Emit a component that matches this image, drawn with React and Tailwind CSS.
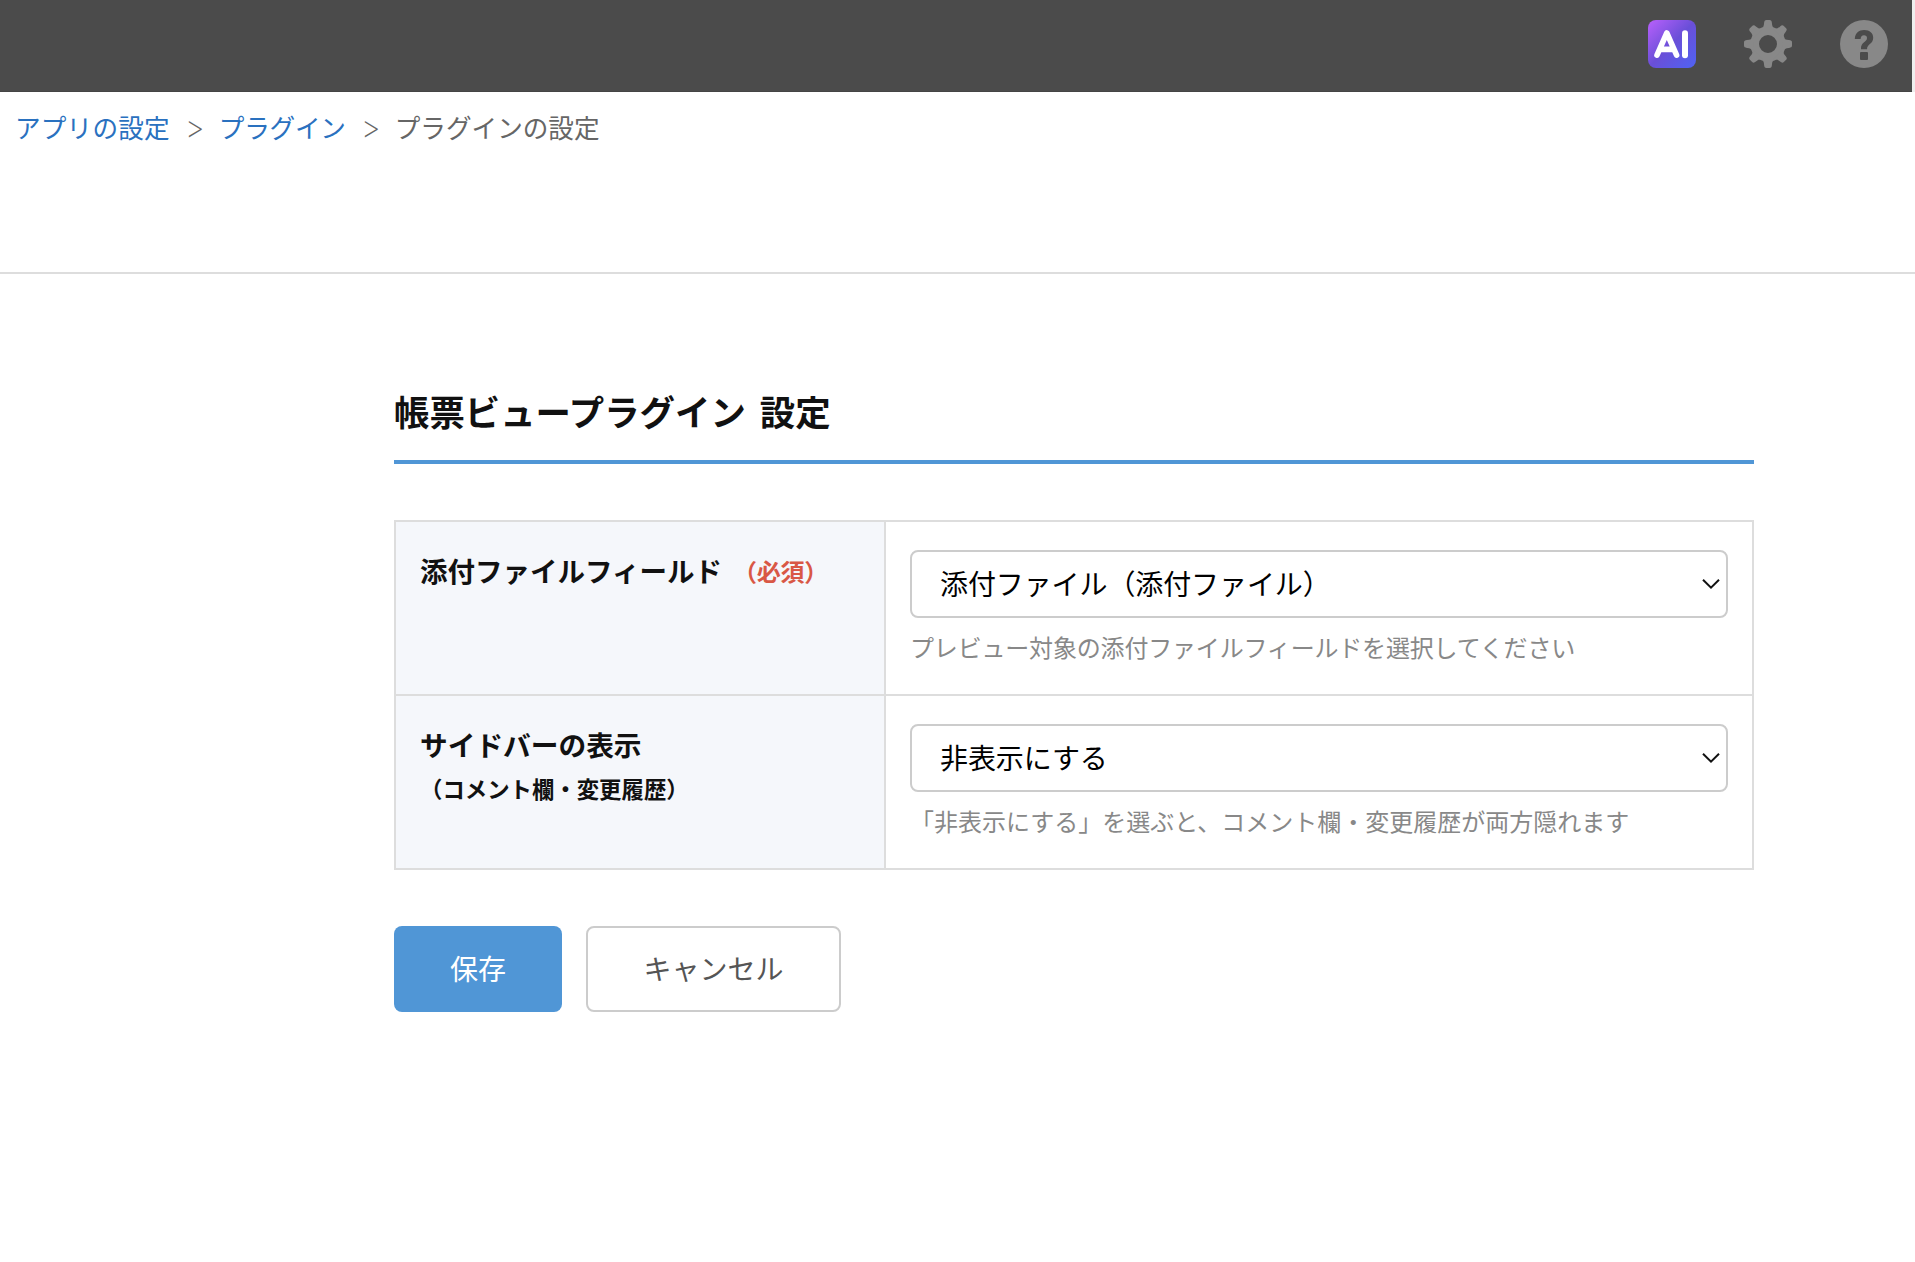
import React from "react";

const AiIcon = () => (
  <svg className="size-12" viewBox="0 0 48 48" fill="none">
    <defs>
      <linearGradient id="ai" x1="0" y1="0" x2="48" y2="48" gradientUnits="userSpaceOnUse">
        <stop offset="0" stopColor="#b960fc" />
        <stop offset="0.5" stopColor="#6a4fd8" />
        <stop offset="1" stopColor="#4f63f3" />
      </linearGradient>
    </defs>
    <rect width="48" height="48" rx="8" fill="url(#ai)" />
    <g stroke="#fff" strokeWidth="5.6" strokeLinecap="round" strokeLinejoin="round">
      <path d="M9 35.2 18.8 13 28.6 35.2M13.4 29.4h10.8" />
      <path d="M37 13.2v22" strokeWidth="6" />
    </g>
  </svg>
);

const TEETH = [0, 45, 90, 135, 180, 225, 270, 315];

const GearIcon = () => (
  <svg className="size-12" viewBox="0 0 48 48">
    <circle cx="24" cy="24" r="13.3" fill="none" stroke="#888" strokeWidth="8.6" />
    {TEETH.map((a) => (
      <path
        key={a}
        transform={`rotate(${a} 24 24)`}
        d="M16.5 9.4Q20 7.6 20.1 3Q20.2 0 22.4 0H25.6Q27.8 0 27.9 3Q28 7.6 31.5 9.4Z"
        fill="#888"
      />
    ))}
  </svg>
);

const HelpIcon = () => (
  <svg className="size-12" viewBox="0 0 48 48">
    <circle cx="24" cy="24" r="24" fill="#888" />
    <path
      d="M14.8 19C15.2 13.2 18.8 10.1 24.2 10.1C29.8 10.1 33.2 13.2 33.2 17.8C33.2 24 27.2 23.8 27 29.2H21C20.6 21.8 27 22.4 27 18C27 16.2 25.8 15.2 24 15.2C21.8 15.2 20.8 16.6 20.6 19Z"
      fill="#4b4b4b"
    />
    <rect x="20" y="32" width="8" height="8" rx="1" fill="#4b4b4b" />
  </svg>
);

const Separator = ({ className }) => (
  <span className={`${className} pl-px text-center font-['Inter',sans-serif] text-[31px] font-extralight text-[#666]`}>&gt;</span>
);

const Select = ({ children }) => (
  <button className="flex h-[68px] w-full items-center justify-between rounded-lg border-2 border-[#ccc] bg-white pr-[6px] pl-[28px] text-[28px] leading-none text-black">
    <span className="-mt-0.5 tracking-[-0.1px] whitespace-nowrap">{children}</span>
    <svg className="h-[10px] w-[18px]" viewBox="0 0 18 10" fill="none" stroke="#111" strokeWidth="2">
      <path d="M1 .8 9 8.6 17 .8" />
    </svg>
  </button>
);

const Row = ({ label, value, hint, last }) => (
  <div className={last ? "flex h-[172px]" : "flex h-[174px] border-b-2 border-[#ddd]"}>
    <div className="w-[490px] shrink-0 border-r-2 border-[#ddd] bg-[#f5f7fb] pt-[26px] pl-6 font-bold">{label}</div>
    <div className="flex-1 px-6 pt-[28px]">
      <Select>{value}</Select>
      <p className="mt-[11px] text-[24px] leading-[36px] whitespace-nowrap text-[#888]">{hint}</p>
    </div>
  </div>
);

export default function App() {
  return (
    <div className="min-h-[1262px] w-full bg-white font-['Noto_Sans_CJK_JP',sans-serif] text-[#111]">
      <div className="flex h-[92px] bg-[#efefef]">
        <header className="mr-[3px] flex flex-1 items-center justify-end gap-12 border-b border-[#444] bg-[#4b4b4b] pr-6 pb-[3px]">
          <AiIcon />
          <GearIcon />
          <HelpIcon />
        </header>
      </div>
      <nav className="flex h-[182px] items-start border-b-2 border-[#ddd] pt-[15px] pl-[15px] text-[25.6px] leading-[40px] text-[#666]">
        <a className="tracking-[0.2px] text-[#2a71bf]">アプリの設定</a>
        <Separator className="w-[49px]" />
        <a className="tracking-[-0.2px] text-[#2a71bf]">プラグイン</a>
        <Separator className="w-[49px]" />
        <span>プラグインの設定</span>
      </nav>
      <main className="ml-[394px] w-[1360px] pt-[109px]">
        <h1 className="h-[81px] border-b-4 border-[#5096d6] text-[35.4px] leading-[56px] font-bold [word-spacing:6px]">
          帳票ビュープラグイン 設定
        </h1>
        <section className="mt-14 border-2 border-[#ddd]">
          <Row
            label={
              <p className="flex items-start text-[27.5px] leading-[44px] whitespace-nowrap">
                添付ファイルフィールド
                <span className="mt-px ml-[11px] text-[24px] tracking-[-0.2px] text-[#d95745]">（必須）</span>
              </p>
            }
            value="添付ファイル（添付ファイル）"
            hint={<span className="tracking-[-0.18px]">プレビュー対象の添付ファイルフィールドを選択してください</span>}
          />
          <Row
            label={
              <>
                <p className="text-[27.7px] leading-[44px]">サイドバーの表示</p>
                <p className="text-[22.4px] leading-[44px]">（コメント欄・変更履歴）</p>
              </>
            }
            value="非表示にする"
            hint="「非表示にする」を選ぶと、コメント欄・変更履歴が両方隠れます"
            last
          />
        </section>
        <div className="mt-14 flex gap-6 text-[28px] leading-none">
          <button className="h-[86px] w-[168px] rounded-lg bg-[#5096d6] pb-0.5 text-white">保存</button>
          <button className="h-[86px] w-[255px] rounded-lg border-2 border-[#ccc] bg-white pb-0.5 text-[#555]">キャンセル</button>
        </div>
      </main>
    </div>
  );
}
